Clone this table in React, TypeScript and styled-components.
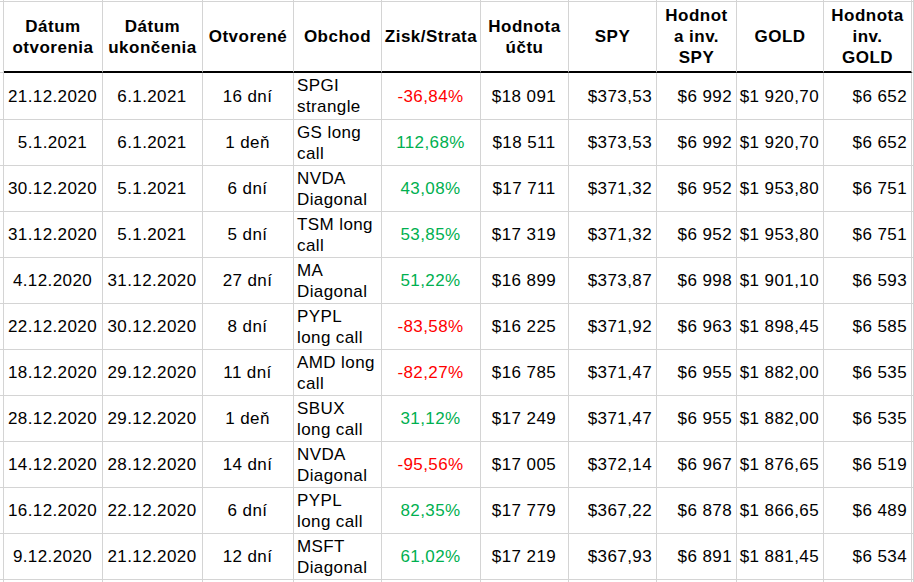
import styled, { createGlobalStyle } from 'styled-components';

type Align = 'left' | 'center' | 'right';

type Trade = {
  opened: string;
  closed: string;
  days: string;
  deal: [string, string];
  pnl: string;
  account: string;
  spy: string;
  spyValue: string;
  gold: string;
  goldValue: string;
};

const trades: Trade[] = [
  { opened: '21.12.2020', closed: '6.1.2021', days: '16 dní', deal: ['SPGI', 'strangle'], pnl: '-36,84%', account: '$18 091', spy: '$373,53', spyValue: '$6 992', gold: '$1 920,70', goldValue: '$6 652' },
  { opened: '5.1.2021', closed: '6.1.2021', days: '1 deň', deal: ['GS long', 'call'], pnl: '112,68%', account: '$18 511', spy: '$373,53', spyValue: '$6 992', gold: '$1 920,70', goldValue: '$6 652' },
  { opened: '30.12.2020', closed: '5.1.2021', days: '6 dní', deal: ['NVDA', 'Diagonal'], pnl: '43,08%', account: '$17 711', spy: '$371,32', spyValue: '$6 952', gold: '$1 953,80', goldValue: '$6 751' },
  { opened: '31.12.2020', closed: '5.1.2021', days: '5 dní', deal: ['TSM long', 'call'], pnl: '53,85%', account: '$17 319', spy: '$371,32', spyValue: '$6 952', gold: '$1 953,80', goldValue: '$6 751' },
  { opened: '4.12.2020', closed: '31.12.2020', days: '27 dní', deal: ['MA', 'Diagonal'], pnl: '51,22%', account: '$16 899', spy: '$373,87', spyValue: '$6 998', gold: '$1 901,10', goldValue: '$6 593' },
  { opened: '22.12.2020', closed: '30.12.2020', days: '8 dní', deal: ['PYPL', 'long call'], pnl: '-83,58%', account: '$16 225', spy: '$371,92', spyValue: '$6 963', gold: '$1 898,45', goldValue: '$6 585' },
  { opened: '18.12.2020', closed: '29.12.2020', days: '11 dní', deal: ['AMD long', 'call'], pnl: '-82,27%', account: '$16 785', spy: '$371,47', spyValue: '$6 955', gold: '$1 882,00', goldValue: '$6 535' },
  { opened: '28.12.2020', closed: '29.12.2020', days: '1 deň', deal: ['SBUX', 'long call'], pnl: '31,12%', account: '$17 249', spy: '$371,47', spyValue: '$6 955', gold: '$1 882,00', goldValue: '$6 535' },
  { opened: '14.12.2020', closed: '28.12.2020', days: '14 dní', deal: ['NVDA', 'Diagonal'], pnl: '-95,56%', account: '$17 005', spy: '$372,14', spyValue: '$6 967', gold: '$1 876,65', goldValue: '$6 519' },
  { opened: '16.12.2020', closed: '22.12.2020', days: '6 dní', deal: ['PYPL', 'long call'], pnl: '82,35%', account: '$17 779', spy: '$367,22', spyValue: '$6 878', gold: '$1 866,65', goldValue: '$6 489' },
  { opened: '9.12.2020', closed: '21.12.2020', days: '12 dní', deal: ['MSFT', 'Diagonal'], pnl: '61,02%', account: '$17 219', spy: '$367,93', spyValue: '$6 891', gold: '$1 881,45', goldValue: '$6 534' },
];

const headers: { lines: string[] }[] = [
  { lines: ['Dátum', 'otvorenia'] },
  { lines: ['Dátum', 'ukončenia'] },
  { lines: ['Otvorené'] },
  { lines: ['Obchod'] },
  { lines: ['Zisk/Strata'] },
  { lines: ['Hodnota', 'účtu'] },
  { lines: ['SPY'] },
  { lines: ['Hodnot', 'a inv.', 'SPY'] },
  { lines: ['GOLD'] },
  { lines: ['Hodnota', 'inv.', 'GOLD'] },
];

const GlobalStyle = createGlobalStyle`
  html, body {
    margin: 0;
    padding: 0;
    background: #ffffff;
    overflow: hidden;
  }
  body {
    font-family: 'Liberation Sans', Arial, sans-serif;
    color: #000000;
  }
`;

const Sheet = styled.div`
  width: 914px;
  height: 582px;
  overflow: hidden;
  background: #ffffff;
  font-size: 17px;
  letter-spacing: 0.4px;
`;

const Row = styled.div<{ $height: number }>`
  display: grid;
  grid-template-columns: 4px 99px 100px 91px 88px 99px 88px 88px 80px 87px 88px 1fr;
  height: ${(p) => p.$height}px;
`;

const Cell = styled.div<{ $align?: Align; $thick?: boolean }>`
  box-sizing: border-box;
  display: flex;
  align-items: center;
  justify-content: ${(p) =>
    p.$align === 'left' ? 'flex-start' : p.$align === 'right' ? 'flex-end' : 'center'};
  text-align: ${(p) => p.$align ?? 'center'};
  padding: 0 4px 0 3px;
  border-right: 1px solid #d4d4d4;
  border-bottom: ${(p) => (p.$thick ? '2px solid #000000' : '1px solid #d4d4d4')};
  line-height: 21px;
  white-space: nowrap;
  overflow: hidden;
`;

const HeadCell = styled(Cell)`
  font-weight: bold;
  letter-spacing: 0.5px;
  padding: 0 2px;
`;

const Spacer = styled.div`
  box-sizing: border-box;
  border-right: 1px solid #d4d4d4;
  border-bottom: 1px solid #d4d4d4;
`;

const Pnl = styled.span<{ $loss: boolean }>`
  color: ${(p) => (p.$loss ? '#ff0000' : '#00b050')};
`;

function EmptyRow({ height }: { height: number }) {
  return (
    <Row $height={height}>
      {Array.from({ length: 12 }, (_, i) => (
        <Spacer key={i} />
      ))}
    </Row>
  );
}

function TradeRow({ trade, height }: { trade: Trade; height: number }) {
  return (
    <Row $height={height}>
      <Spacer />
      <Cell>{trade.opened}</Cell>
      <Cell>{trade.closed}</Cell>
      <Cell>{trade.days}</Cell>
      <Cell $align='left'>
        <div>
          {trade.deal[0]}
          <br />
          {trade.deal[1]}
        </div>
      </Cell>
      <Cell>
        <Pnl $loss={trade.pnl.startsWith('-')}>{trade.pnl}</Pnl>
      </Cell>
      <Cell>{trade.account}</Cell>
      <Cell $align='right'>{trade.spy}</Cell>
      <Cell $align='right'>{trade.spyValue}</Cell>
      <Cell $align='right'>{trade.gold}</Cell>
      <Cell $align='right'>{trade.goldValue}</Cell>
      <Spacer />
    </Row>
  );
}

export default function App() {
  return (
    <>
      <GlobalStyle />
      <Sheet>
        <EmptyRow height={2} />
        <Row $height={71}>
          <Spacer />
          {headers.map((h, i) => (
            <HeadCell key={i} $thick>
              <div>
                {h.lines.map((line, j) => (
                  <div key={j}>{line}</div>
                ))}
              </div>
            </HeadCell>
          ))}
          <Spacer />
        </Row>
        {trades.map((t, i) => (
          <TradeRow key={i} trade={t} height={i === 0 ? 47 : 46} />
        ))}
        <EmptyRow height={10} />
      </Sheet>
    </>
  );
}
